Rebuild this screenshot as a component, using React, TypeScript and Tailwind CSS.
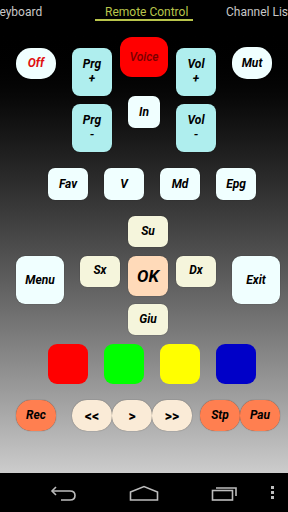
import React from 'react';

const font = { fontFamily: 'Roboto, "Noto Sans", sans-serif' };

type BtnProps = {
  className: string;
  children?: React.ReactNode;
};

const Btn: React.FC<BtnProps> = ({ className, children }) => (
  <div
    className={`flex flex-col items-center justify-center shrink-0 italic font-bold text-[12px] leading-[15px] text-black shadow-[0_0_1px_rgba(0,0,0,0.6)] ${className}`}
  >
    {children}
  </div>
);

export default function App() {
  return (
    <div className="w-[288px] h-[512px] flex flex-col bg-black overflow-hidden" style={font}>
      {/* tabs */}
      <div className="h-[26px] shrink-0 relative bg-black text-[12px]">
        <span className="absolute left-[-8px] top-[3px] text-[#c8c8c8]">Keyboard</span>
        <span className="absolute left-[105px] top-[3px] text-[#b9c54b]">Remote Control</span>
        <span className="absolute left-[226px] top-[3px] text-[#c8c8c8] whitespace-nowrap">Channel List</span>
        <div className="absolute left-[95px] top-[19px] w-[98px] h-[2px] bg-[#b9c54b]" />
      </div>

      {/* remote */}
      <div className="flex-1 flex flex-col bg-gradient-to-b from-[#000000] to-[#cccccc]">
        {/* top block */}
        <div className="flex items-start pt-[11px] pl-[16px]">
          <Btn className="mt-[11px] w-[40px] h-[31px] rounded-[15px] bg-[#f0ffff] !text-[#e01010]">Off</Btn>
          <div className="ml-[16px] mt-[11px] flex flex-col gap-[8px]">
            <Btn className="w-[40px] h-[48px] rounded-[8px] bg-[#afeeee]">
              <span>Prg</span>
              <span>+</span>
            </Btn>
            <Btn className="w-[40px] h-[48px] rounded-[8px] bg-[#afeeee]">
              <span>Prg</span>
              <span>-</span>
            </Btn>
          </div>
          <div className="ml-[8px] flex flex-col items-center">
            <Btn className="w-[48px] h-[40px] rounded-[12px] bg-[#ff0000] !text-[#7a0000] font-medium">Voice</Btn>
            <Btn className="mt-[19px] w-[32px] h-[32px] rounded-[7px] bg-[#f0ffff]">In</Btn>
          </div>
          <div className="ml-[8px] mt-[11px] flex flex-col gap-[8px]">
            <Btn className="w-[40px] h-[48px] rounded-[8px] bg-[#afeeee]">
              <span>Vol</span>
              <span>+</span>
            </Btn>
            <Btn className="w-[40px] h-[48px] rounded-[8px] bg-[#afeeee]">
              <span>Vol</span>
              <span>-</span>
            </Btn>
          </div>
          <Btn className="ml-[16px] mt-[10px] w-[40px] h-[32px] rounded-[15px] bg-[#f0ffff]">Mut</Btn>
        </div>

        {/* fav row */}
        <div className="flex gap-[16px] pl-[48px] mt-[16px]">
          <Btn className="w-[40px] h-[32px] rounded-[7px] bg-[#f0ffff]">Fav</Btn>
          <Btn className="w-[40px] h-[32px] rounded-[7px] bg-[#f0ffff]">V</Btn>
          <Btn className="w-[40px] h-[32px] rounded-[7px] bg-[#f0ffff]">Md</Btn>
          <Btn className="w-[40px] h-[32px] rounded-[7px] bg-[#f0ffff]">Epg</Btn>
        </div>

        {/* dpad */}
        <div className="pl-[128px] mt-[16px]">
          <Btn className="w-[40px] h-[31px] rounded-[7px] bg-[#f5f5dc]">Su</Btn>
        </div>
        <div className="flex items-start pl-[16px] mt-[9px]">
          <Btn className="w-[48px] h-[48px] rounded-[9px] bg-[#f0ffff]">Menu</Btn>
          <Btn className="ml-[16px] w-[40px] h-[31px] rounded-[7px] bg-[#f5f5dc] pb-[3px]">Sx</Btn>
          <Btn className="ml-[8px] w-[40px] h-[40px] rounded-[8px] bg-[#ffdab9] !text-[17px]">OK</Btn>
          <Btn className="ml-[8px] w-[40px] h-[31px] rounded-[7px] bg-[#f5f5dc] pb-[3px]">Dx</Btn>
          <Btn className="ml-[16px] w-[48px] h-[48px] rounded-[9px] bg-[#f0ffff]">Exit</Btn>
        </div>
        <div className="pl-[128px]">
          <Btn className="w-[40px] h-[31px] rounded-[7px] bg-[#f5f5dc]">Giu</Btn>
        </div>

        {/* colour keys */}
        <div className="flex gap-[16px] pl-[48px] mt-[9px]">
          <div className="w-[40px] h-[40px] rounded-[9px] bg-[#ff0000]" />
          <div className="w-[40px] h-[40px] rounded-[9px] bg-[#00ff00]" />
          <div className="w-[40px] h-[40px] rounded-[9px] bg-[#ffff00]" />
          <div className="w-[40px] h-[40px] rounded-[9px] bg-[#0000c8]" />
        </div>

        {/* transport */}
        <div className="flex pl-[16px] mt-[16px]">
          <Btn className="w-[40px] h-[31px] rounded-[15px] bg-[#ff7f50]">Rec</Btn>
          <Btn className="ml-[16px] w-[40px] h-[31px] rounded-[15px] bg-[#faebd7] !text-[14px] !not-italic font-extrabold pt-[2px]">&lt;&lt;</Btn>
          <Btn className="w-[40px] h-[31px] rounded-[15px] bg-[#faebd7] !text-[14px] !not-italic font-extrabold pt-[2px]">&gt;</Btn>
          <Btn className="w-[40px] h-[31px] rounded-[15px] bg-[#faebd7] !text-[14px] !not-italic font-extrabold pt-[2px]">&gt;&gt;</Btn>
          <Btn className="ml-[8px] w-[40px] h-[31px] rounded-[15px] bg-[#ff7f50]">Stp</Btn>
          <Btn className="w-[40px] h-[31px] rounded-[15px] bg-[#ff7f50]">Pau</Btn>
        </div>
      </div>

      {/* nav bar */}
      <div className="h-[39px] shrink-0 bg-black flex items-center relative">
        <svg className="absolute left-[50px] top-[12px]" width="28" height="16" viewBox="0 0 28 16" fill="none" stroke="#bdbdbd" strokeWidth="1.6">
          <path d="M6 2 L2 6 L6 10" />
          <path d="M2 6 H20 Q25 6 25 10.5 Q25 15 20 15 H11" />
        </svg>
        <svg className="absolute left-[129px] top-[12px]" width="30" height="16" viewBox="0 0 30 16" fill="none" stroke="#bdbdbd" strokeWidth="1.6">
          <path d="M1.5 7 L15 1.5 L28.5 7 V15 H1.5 Z" />
        </svg>
        <svg className="absolute left-[211px] top-[12px]" width="28" height="16" viewBox="0 0 28 16" fill="none" stroke="#bdbdbd" strokeWidth="1.6">
          <rect x="1.5" y="5.5" width="20" height="9.5" />
          <path d="M5 3 H25 V11" />
        </svg>
        <div className="absolute left-[271px] top-[13px] flex flex-col gap-[2px]">
          <div className="w-[3px] h-[3px] bg-[#bdbdbd]" />
          <div className="w-[3px] h-[3px] bg-[#bdbdbd]" />
          <div className="w-[3px] h-[3px] bg-[#bdbdbd]" />
        </div>
      </div>
    </div>
  );
}
